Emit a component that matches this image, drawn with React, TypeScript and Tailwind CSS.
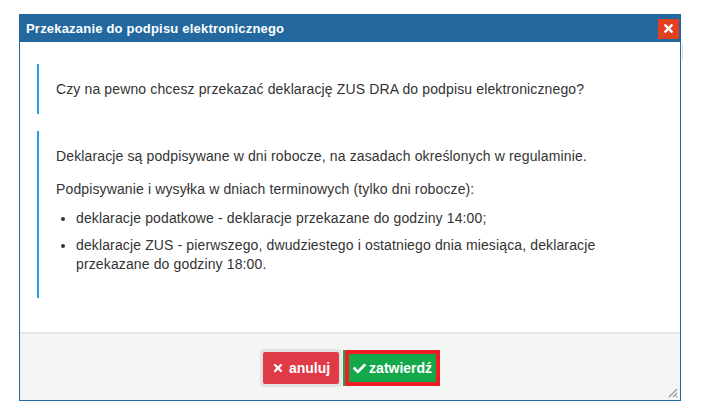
import React from 'react';
import { FaTimes, FaCheck } from 'react-icons/fa';

function ResizeGrip() {
  return (
    <svg width="12" height="12" viewBox="0 0 12 12" className="absolute bottom-[2px] right-[2px]">
      <path d="M11 3 L3 11 M11 7 L7 11 M11 10 L10 11" stroke="#9a9a9a" strokeWidth="1.2" />
    </svg>
  );
}

export default function App() {
  return (
    <div
      className="w-[710px] h-[410px] bg-white relative"
      style={{ fontFamily: '"Liberation Sans", Arial, sans-serif' }}
    >
      {/* page behind the dialog */}
      <div className="absolute left-[682px] top-[44px] w-[3px] h-[16px] border-l border-gray-300" />

      <div className="absolute left-[19px] top-[14px] w-[662px] h-[387px] flex flex-col border border-[#23699f] bg-white">
        <div className="h-[27px] bg-[#23699f] flex items-center justify-between pl-[6px] pr-[1px]">
          <span className="text-white font-bold text-[13px] tracking-[0.2px]">Przekazanie do podpisu elektronicznego</span>
          <button className="w-[21px] h-[20px] bg-[#e3401f] flex items-center justify-center text-white">
            <FaTimes size={13} />
          </button>
        </div>

        <div className="flex-1 px-[17px] pt-[22px] text-[14px] text-[#333] tracking-[0.13px] flex flex-col gap-[17px]">
          <div className="border-l-2 border-[#1fa1e8] pl-[17px] py-[15px] leading-[20px]">
            Czy na pewno chcesz przekazać deklarację ZUS DRA do podpisu elektronicznego?
          </div>

          <div className="border-l-2 border-[#1fa1e8] pl-[17px] pt-[15px] pb-[24px] leading-[20px]">
            <p>Deklaracje są podpisywane w dni robocze, na zasadach określonych w regulaminie.</p>
            <p className="mt-[13px]">Podpisywanie i wysyłka w dniach terminowych (tylko dni robocze):</p>
            <ul className="list-disc pl-[20px] mt-[10px] leading-[19px]">
              <li>deklaracje podatkowe - deklaracje przekazane do godziny 14:00;</li>
              <li className="mt-[8px] pr-[20px]">
                deklaracje ZUS - pierwszego, dwudziestego i ostatniego dnia miesiąca, deklaracje przekazane do godziny 18:00.
              </li>
            </ul>
          </div>
        </div>

        <div className="h-[68px] relative bg-[#f4f4f4] border-t-2 border-[#e6e6e6] flex items-center justify-center gap-[1px] pt-[2px]">
          <div className="p-[3px] rounded-[4px] bg-[#e2e2e2]">
            <button className="h-[32px] px-[9px] bg-[#df3b47] text-white text-[14px] font-bold flex items-center gap-[5px] rounded-[2px]">
              <FaTimes size={12} />
              anuluj
            </button>
          </div>
          <div className="border-l-2 border-[#14a84b]">
            <button className="h-[36px] px-[4px] border-4 border-[#ee1c25] bg-[#14a84b] text-white text-[14px] font-bold flex items-center gap-[3px]">
              <FaCheck size={13} />
              zatwierdź
            </button>
          </div>
          <ResizeGrip />
        </div>
      </div>
    </div>
  );
}
